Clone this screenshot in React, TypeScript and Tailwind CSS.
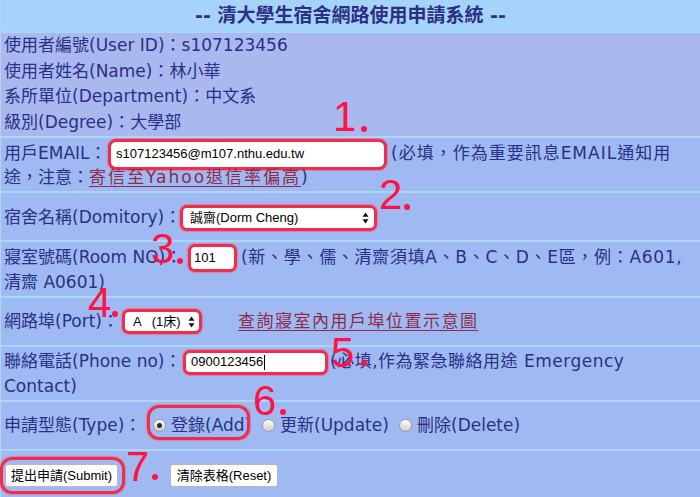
import React from "react";

function Arrows() {
  return (
    <svg width="7" height="12" viewBox="0 0 7 12" className="shrink-0">
      <path d="M3.5 0.5 L6.5 4.8 L0.5 4.8 Z" fill="#111" />
      <path d="M3.5 11.5 L6.5 7.2 L0.5 7.2 Z" fill="#111" />
    </svg>
  );
}

function Radio({ checked }: { checked?: boolean }) {
  return (
    <span className="inline-flex shrink-0 w-[13px] h-[13px] rounded-full border border-[#9c9c9c] bg-linear-to-b from-[#fefefe] to-[#cfcfcf] items-center justify-center">
      {checked && <span className="w-[5px] h-[5px] rounded-full bg-[#2e2e2e]" />}
    </span>
  );
}

function Num({ n, left, top }: { n: string; left: number; top: number }) {
  return (
    <span
      className="absolute font-['Liberation_Sans',sans-serif] text-[42px] leading-[42px] text-[#ff1245]"
      style={{ left, top }}
    >
      {n}
    </span>
  );
}

function Dot({ x, y }: { x: number; y: number }) {
  return (
    <span
      className="absolute w-[6px] h-[6px] rounded-full bg-[#ff1245]"
      style={{ left: x - 3, top: y - 3 }}
    />
  );
}

const box =
  "shrink-0 bg-white border-[3px] border-[#ef2d4e] shadow-[0_0_1px_1px_rgba(255,90,110,0.55)] flex items-center text-[13px] text-black font-['Liberation_Sans','Noto_Sans_CJK_TC',sans-serif]";

export default function App() {
  return (
    <div className="relative w-[700px] h-[497px] overflow-hidden bg-[#aad6fc] font-['DejaVu_Sans','Noto_Sans_CJK_TC',sans-serif] text-[17px] text-[#2b2f85] flex flex-col gap-[2px] pl-[1px]">
      {/* Header */}
      <div className="h-[31px] shrink-0 bg-[#a6d3fa] flex items-center justify-center font-bold text-[19px] whitespace-nowrap">
        -- 清大學生宿舍網路使用申請系統 --
      </div>

      {/* Info */}
      <div className="h-[103px] shrink-0 bg-[#a9b9ef] px-[3px] leading-[25.5px] whitespace-nowrap">
        <div>使用者編號(User ID)：s107123456</div>
        <div>使用者姓名(Name)：林小華</div>
        <div>系所單位(Department)：中文系</div>
        <div>級別(Degree)：大學部</div>
      </div>

      {/* Email */}
      <div className="h-[53px] shrink-0 bg-[#9fbaf2] px-[3px] pt-[3px] flex flex-col whitespace-nowrap">
        <div className="h-[26px] flex items-center">
          <span className="w-[104px] shrink-0">用戶EMAIL：</span>
          <span className={`${box} w-[279px] h-[31px] rounded-[8px] pl-[5px]`}>
            s107123456@m107.nthu.edu.tw
          </span>
          <span className="ml-[4px] tracking-[1px]">(必填，作為重要訊息EMAIL通知用</span>
        </div>
        <div className="h-[22px] flex items-center">
          <span>途，注意：</span>
          <span className="text-[#8e2a4a] underline underline-offset-[3px] tracking-[2px]">
            寄信至Yahoo退信率偏高
          </span>
          <span>)</span>
        </div>
      </div>

      {/* Dormitory */}
      <div className="h-[47px] shrink-0 bg-[#9fbaf2] px-[3px] pt-[3px] flex items-center whitespace-nowrap">
        <span className="w-[176px] shrink-0">宿舍名稱(Domitory)：</span>
        <span className={`${box} w-[197px] h-[26px] rounded-[7px] pl-[7px] pr-[5px] justify-between`}>
          <span>誠齋(Dorm Cheng)</span>
          <Arrows />
        </span>
      </div>

      {/* Room */}
      <div className="h-[54px] shrink-0 bg-[#9fbaf2] px-[3px] pt-[3px] flex flex-col whitespace-nowrap">
        <div className="h-[26px] flex items-center">
          <span className="w-[184px] shrink-0">寢室號碼(Room NO)：</span>
          <span className={`${box} w-[49px] h-[28px] rounded-[7px] pl-[3px]`}>101</span>
          <span className="ml-[4px] tracking-[0.7px]">(新、學、儒、清齋須填A、B、C、D、E區，例：A601,</span>
        </div>
        <div className="h-[24px] flex items-center">清齋 A0601)</div>
      </div>

      {/* Port */}
      <div className="h-[47px] shrink-0 bg-[#9fbaf2] px-[3px] flex items-center whitespace-nowrap">
        <span className="w-[118px] shrink-0">網路埠(Port)：</span>
        <span className={`${box} w-[80px] h-[25px] rounded-[7px] pl-[8px] pr-[4px]`}>
          <span>A</span>
          <span className="ml-[10px]">(1床)</span>
          <span className="ml-auto">
            <Arrows />
          </span>
        </span>
        <span className="ml-[36px] text-[#8e2a4a] underline underline-offset-[3px] tracking-[1.5px]">
          查詢寢室內用戶埠位置示意圖
        </span>
      </div>

      {/* Phone */}
      <div className="h-[53px] shrink-0 bg-[#9fbaf2] px-[3px] pt-[2px] flex flex-col whitespace-nowrap">
        <div className="h-[26px] flex items-center">
          <span className="w-[179px] shrink-0">聯絡電話(Phone no)：</span>
          <span className={`${box} w-[145px] h-[25px] rounded-[7px] pl-[5px]`}>
            <span>0900123456</span>
            <span className="ml-[1px] w-[1px] h-[15px] bg-black" />
          </span>
          <span className="ml-[2px] tracking-[0.5px]">(必填,作為緊急聯絡用途 Emergency</span>
        </div>
        <div className="h-[24px] flex items-center">Contact)</div>
      </div>

      {/* Type */}
      <div className="relative h-[47px] shrink-0 bg-[#9fbaf2] px-[3px] flex items-center whitespace-nowrap">
        <span className="w-[149px] shrink-0">申請型態(Type)：</span>
        <Radio checked />
        <span className="ml-[5px] w-[91px] shrink-0">登錄(Add)</span>
        <Radio />
        <span className="ml-[5px] w-[119px] shrink-0">更新(Update)</span>
        <Radio />
        <span className="ml-[5px]">刪除(Delete)</span>
        <span className="absolute left-[146px] top-[3px] w-[103px] h-[35px] rounded-[12px] border-[3px] border-[#ef2d4e] shadow-[0_0_1px_1px_rgba(255,90,110,0.55)]" />
      </div>

      {/* Buttons */}
      <div className="relative flex-1 bg-[#9fbaf2] pl-[4px] pt-[13px] flex items-start whitespace-nowrap">
        <button className="w-[113px] h-[23px] bg-white border border-[#b8b8b8] rounded-[3px] text-[13px] text-black font-['Liberation_Sans','Noto_Sans_CJK_TC',sans-serif] flex items-center justify-center">
          提出申請(Submit)
        </button>
        <button className="ml-[52px] w-[108px] h-[23px] bg-white border border-[#b8b8b8] rounded-[3px] text-[13px] text-black font-['Liberation_Sans','Noto_Sans_CJK_TC',sans-serif] flex items-center justify-center">
          清除表格(Reset)
        </button>
        <span className="absolute left-[-1px] top-[6px] w-[125px] h-[37px] rounded-[12px] border-[3px] border-[#ef2d4e] shadow-[0_0_1px_1px_rgba(255,90,110,0.55)]" />
      </div>

      {/* Annotations */}
      <Num n="1" left={333} top={96} />
      <Dot x={364} y={129} />
      <Num n="2" left={379} top={174} />
      <Dot x={407} y={207} />
      <Num n="3" left={151} top={228} />
      <Dot x={180} y={261} />
      <Num n="4" left={88} top={282} />
      <Dot x={115} y={314} />
      <Num n="5" left={331} top={332} />
      <Dot x={364} y={363} />
      <Num n="6" left={253} top={380} />
      <Dot x={283} y={412} />
      <Num n="7" left={126} top={446} />
      <Dot x={155} y={477} />
    </div>
  );
}
